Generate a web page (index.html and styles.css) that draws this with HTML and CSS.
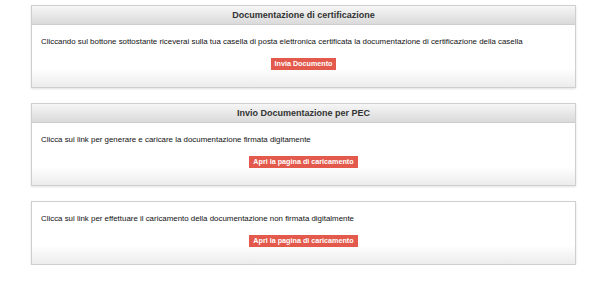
FILE: index.html
```html
<!doctype html>
<html>
    <head>
        <meta charset="utf-8" />
        <title>Documentazione di certificazione</title>
        <link rel="stylesheet" href="styles.css">
    </head>
    <body>
        <div id="wrapper">
            <div class="box">
                <div class="box-head">Documentazione di certificazione</div>
                <div class="box-body">
                    <p>Cliccando sul bottone sottostante riceverai sulla tua casella di posta elettronica certificata la documentazione di certificazione della casella</p>
                    <a href="" class="button">Invia Documento</a>
                </div>
            </div>

            <div class="box">
                <div class="box-head">Invio Documentazione per PEC</div>
                <div class="box-body">
                    <p>Clicca sul link per generare e caricare la documentazione firmata digitamente</p>
                    <a href="" class="button">Apri la pagina di caricamento</a>
                </div>
            </div>

            <div class="box">
                <div class="box-body">
                    <p>Clicca sul link per effettuare il caricamento della documentazione non firmata digitalmente</p>
                    <a href="" class="button">Apri la pagina di caricamento</a>
                </div>
            </div>
        </div>
    </body>
</html>
```

FILE: styles.css
```css
* {
    margin: 0;
    padding: 0;
    box-sizing: border-box;
    font-family: "Liberation Sans", Arial, sans-serif;
}

html, body {
    background: #fff;
}

#wrapper {
    padding: 5px 0 0 31px;
    width: 576px;
    display: flex;
    flex-direction: column;
    gap: 15px;
}

.box {
    border: 1px solid #cfcfcf;
    box-shadow: 0 1px 2px rgba(0, 0, 0, 0.12);
    background: #fff;
}

.box-head {
    height: 19px;
    line-height: 18px;
    border-bottom: 1px solid #cdcdcd;
    background: linear-gradient(to bottom, #f6f6f6, #dadada);
    text-align: center;
    font-size: 9px;
    font-weight: bold;
    color: #333;
}

.box-body {
    padding: 11px 9px 17px;
    background: linear-gradient(to bottom, #fff 70%, #ececec);
}

.box-body p {
    font-size: 7.9px;
    line-height: 12px;
    color: #111;
    margin-bottom: 10px;
}

.button {
    display: block;
    width: fit-content;
    margin: 0 auto;
    height: 12px;
    line-height: 12px;
    padding: 0 4px;
    background: #e35a4c;
    color: #fff;
    font-size: 7.2px;
    font-weight: bold;
    text-decoration: none;
}
```
